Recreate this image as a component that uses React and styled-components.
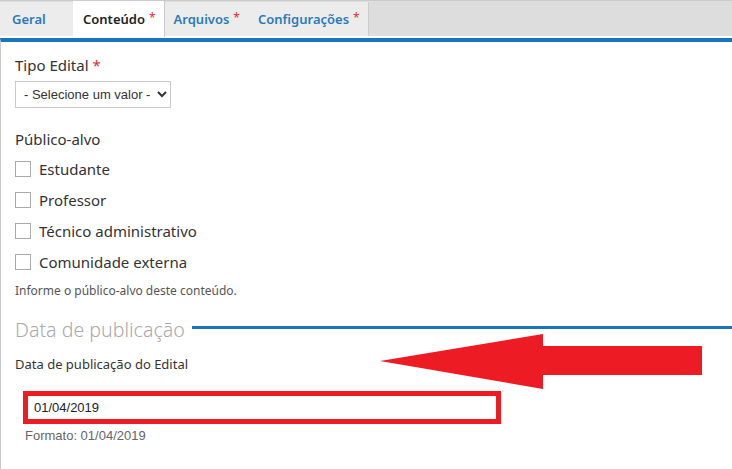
import styled, { createGlobalStyle } from "styled-components";

const GlobalStyle = createGlobalStyle`
  html, body {
    margin: 0;
    padding: 0;
    background: #fff;
  }
  body {
    font-family: "Noto Sans", "Open Sans", sans-serif;
    color: #333;
  }
`;

const tabs = [
  { label: "Geral" },
  { label: "Conteúdo", required: true, active: true },
  { label: "Arquivos", required: true },
  { label: "Configurações", required: true },
];

const audiences = ["Estudante", "Professor", "Técnico administrativo", "Comunidade externa"];

const App = () => {
  return (
    <Page>
      <GlobalStyle />
      <TabBar>
        {tabs.map(({ label, required, active }) => (
          <Tab key={label} $active={active}>
            {label}
            {required && <TabStar>*</TabStar>}
          </Tab>
        ))}
      </TabBar>
      <Panel>
        <Field>
          <Label>
            Tipo Edital <Star>*</Star>
          </Label>
          <Select defaultValue="">
            <option value="">- Selecione um valor -</option>
          </Select>
        </Field>

        <Field>
          <Label>Público-alvo</Label>
          <Checks>
            {audiences.map((a) => (
              <CheckRow key={a}>
                <Box />
                {a}
              </CheckRow>
            ))}
          </Checks>
          <Help>Informe o público-alvo deste conteúdo.</Help>
        </Field>

        <Legend>
          <span>Data de publicação</span>
          <LegendLine />
        </Legend>

        <SubLabel>Data de publicação do Edital</SubLabel>
        <Highlight>
          <DateInput defaultValue="01/04/2019" />
        </Highlight>
        <Format>Formato: 01/04/2019</Format>

        <Arrow width="324" height="57" viewBox="0 0 324 57">
          <polygon points="0,27 163,0 163,12 322,12 322,41 163,41 163,55" fill="#ed1c24" />
        </Arrow>
      </Panel>
    </Page>
  );
};
export default App;

const Page = styled.div`
  width: 732px;
  height: 469px;
  overflow: hidden;
`;

const TabBar = styled.div`
  display: flex;
  height: 34px;
  background: #dddddd;
  border-top: 1px solid #cccccc;
  box-sizing: content-box;
  padding-top: 1px;
`;

const Tab = styled.div`
  display: flex;
  align-items: center;
  min-width: 52px;
  padding: 0 8px 0 9px;
  font-size: 13px;
  font-weight: 600;
  color: ${(p) => (p.$active ? "#222" : "#2a7ab9")};
  background: ${(p) => (p.$active ? "#fff" : "#ececec")};
  border-right: 1px solid #cccccc;
  border-left: 1px solid ${(p) => (p.$active ? "#fff" : "transparent")};
  margin-left: -1px;
  height: ${(p) => (p.$active ? "36px" : "34px")};
  margin-top: ${(p) => (p.$active ? "-1px" : "0")};
  position: relative;
  z-index: ${(p) => (p.$active ? 1 : 0)};
  &:first-child {
    margin-left: 0;
    padding: 0 9px 0 11px;
  }
`;

const TabStar = styled.span`
  color: #e0302f;
  font-weight: 400;
  font-size: 12px;
  margin-left: 4px;
  margin-top: -4px;
`;

const Star = styled.span`
  color: #e0302f;
`;

const Panel = styled.div`
  position: relative;
  margin-top: 2px;
  border-top: 4px solid #1a75bb;
  border-left: 1px solid #cccccc;
  padding: 12px 0 0 14px;
  height: 440px;
`;

const Field = styled.div`
  display: flex;
  flex-direction: column;
  align-items: flex-start;
  margin-bottom: 20px;
`;

const Label = styled.div`
  font-size: 15px;
  line-height: 22px;
  color: #333;
  margin-bottom: 4px;
`;

const Select = styled.select`
  font-family: "Liberation Sans", Arial, sans-serif;
  font-size: 13px;
  color: #333;
  width: 156px;
  height: 27px;
  border: 1px solid #cccccc;
  border-radius: 0;
  background: #fff;
  padding: 0 4px;
  margin-top: 1px;
`;

const Checks = styled.div`
  display: flex;
  flex-direction: column;
  gap: 9px;
  margin-top: 4px;
`;

const CheckRow = styled.label`
  display: flex;
  align-items: center;
  gap: 8px;
  font-size: 15px;
  line-height: 22px;
  color: #333;
`;

const Box = styled.span`
  width: 14px;
  height: 14px;
  border: 1px solid #aaaaaa;
  background: #fff;
`;

const Help = styled.div`
  margin-top: 9px;
  font-size: 12px;
  color: #555;
`;

const Legend = styled.div`
  display: flex;
  align-items: center;
  gap: 7px;
  margin-top: -3px;
  font-size: 19.6px;
  font-weight: 300;
  color: #aaaaaa;
  span {
    white-space: nowrap;
  }
`;

const LegendLine = styled.div`
  flex: 1;
  height: 3px;
  background: #1a75bb;
  margin-top: -4px;
`;

const SubLabel = styled.div`
  margin-top: 12px;
  font-size: 13px;
  color: #333;
`;

const Highlight = styled.div`
  margin: 18px 0 0 8px;
  width: 468px;
  border: 5px solid #ed1c24;
`;

const DateInput = styled.input`
  display: block;
  width: 100%;
  box-sizing: border-box;
  height: 23px;
  border: none;
  outline: none;
  padding: 0 6px;
  font-family: "Liberation Sans", Arial, sans-serif;
  font-size: 13px;
  color: #222;
`;

const Format = styled.div`
  margin: 4px 0 0 10px;
  font-family: "Liberation Sans", Arial, sans-serif;
  font-size: 13px;
  color: #666;
`;

const Arrow = styled.svg`
  position: absolute;
  left: 379px;
  top: 292px;
`;
